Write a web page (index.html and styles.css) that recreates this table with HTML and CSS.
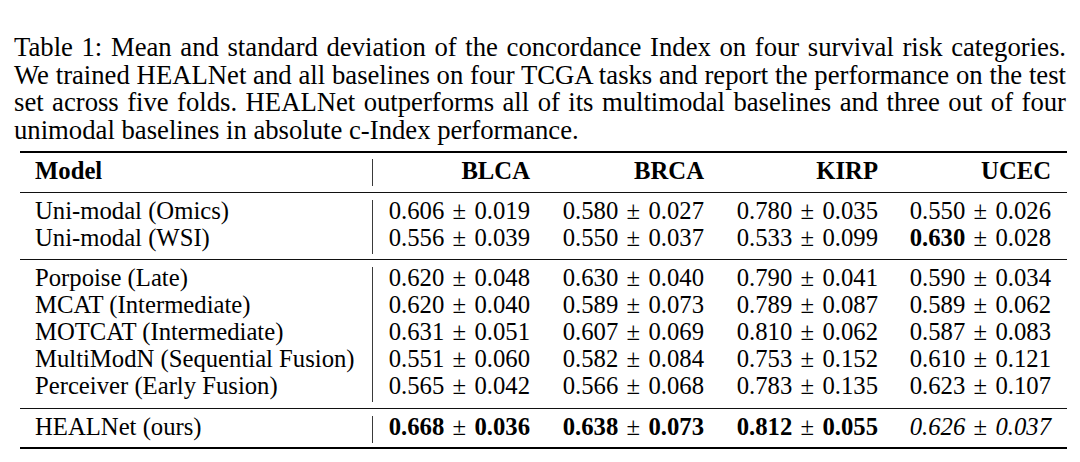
FILE: index.html
```html
<!DOCTYPE html>
<html lang="en">
<head>
<meta charset="utf-8">
<title>Table 1</title>
<link rel="stylesheet" href="styles.css">
</head>
<body>
<div class="page">
  <p class="caption">
    <span class="line">Table 1: Mean and standard deviation of the concordance Index on four survival risk categories.</span>
    <span class="line">We trained HEALNet and all baselines on four TCGA tasks and report the performance on the test</span>
    <span class="line">set across five folds. HEALNet outperforms all of its multimodal baselines and three out of four</span>
    <span class="line last">unimodal baselines in absolute c-Index performance.</span>
  </p>
  <div class="table">
    <div class="rule thick"></div>
    <div class="group head">
      <div class="row">
        <div class="cell model">Model</div>
        <div class="cell num c1">BLCA</div>
        <div class="cell num c2">BRCA</div>
        <div class="cell num c3">KIRP</div>
        <div class="cell num c4">UCEC</div>
      </div>
    </div>
    <div class="rule"></div>
    <div class="group g1">
      <div class="row">
        <div class="cell model">Uni-modal (Omics)</div>
        <div class="cell num c1">0.606<span class="pm">±</span>0.019</div>
        <div class="cell num c2">0.580<span class="pm">±</span>0.027</div>
        <div class="cell num c3">0.780<span class="pm">±</span>0.035</div>
        <div class="cell num c4">0.550<span class="pm">±</span>0.026</div>
      </div>
      <div class="row">
        <div class="cell model">Uni-modal (WSI)</div>
        <div class="cell num c1">0.556<span class="pm">±</span>0.039</div>
        <div class="cell num c2">0.550<span class="pm">±</span>0.037</div>
        <div class="cell num c3">0.533<span class="pm">±</span>0.099</div>
        <div class="cell num c4"><b>0.630</b><span class="pm">±</span>0.028</div>
      </div>
    </div>
    <div class="rule"></div>
    <div class="group g2">
      <div class="row">
        <div class="cell model">Porpoise (Late)</div>
        <div class="cell num c1">0.620<span class="pm">±</span>0.048</div>
        <div class="cell num c2">0.630<span class="pm">±</span>0.040</div>
        <div class="cell num c3">0.790<span class="pm">±</span>0.041</div>
        <div class="cell num c4">0.590<span class="pm">±</span>0.034</div>
      </div>
      <div class="row">
        <div class="cell model">MCAT (Intermediate)</div>
        <div class="cell num c1">0.620<span class="pm">±</span>0.040</div>
        <div class="cell num c2">0.589<span class="pm">±</span>0.073</div>
        <div class="cell num c3">0.789<span class="pm">±</span>0.087</div>
        <div class="cell num c4">0.589<span class="pm">±</span>0.062</div>
      </div>
      <div class="row">
        <div class="cell model">MOTCAT (Intermediate)</div>
        <div class="cell num c1">0.631<span class="pm">±</span>0.051</div>
        <div class="cell num c2">0.607<span class="pm">±</span>0.069</div>
        <div class="cell num c3">0.810<span class="pm">±</span>0.062</div>
        <div class="cell num c4">0.587<span class="pm">±</span>0.083</div>
      </div>
      <div class="row">
        <div class="cell model">MultiModN (Sequential Fusion)</div>
        <div class="cell num c1">0.551<span class="pm">±</span>0.060</div>
        <div class="cell num c2">0.582<span class="pm">±</span>0.084</div>
        <div class="cell num c3">0.753<span class="pm">±</span>0.152</div>
        <div class="cell num c4">0.610<span class="pm">±</span>0.121</div>
      </div>
      <div class="row">
        <div class="cell model">Perceiver (Early Fusion)</div>
        <div class="cell num c1">0.565<span class="pm">±</span>0.042</div>
        <div class="cell num c2">0.566<span class="pm">±</span>0.068</div>
        <div class="cell num c3">0.783<span class="pm">±</span>0.135</div>
        <div class="cell num c4">0.623<span class="pm">±</span>0.107</div>
      </div>
    </div>
    <div class="rule"></div>
    <div class="group g3">
      <div class="row">
        <div class="cell model">HEALNet (ours)</div>
        <div class="cell num c1"><b>0.668</b><span class="pm">±</span><b>0.036</b></div>
        <div class="cell num c2"><b>0.638</b><span class="pm">±</span><b>0.073</b></div>
        <div class="cell num c3"><b>0.812</b><span class="pm">±</span><b>0.055</b></div>
        <div class="cell num c4"><i>0.626</i><span class="pm">±</span><i>0.037</i></div>
      </div>
    </div>
    <div class="rule thick"></div>
  </div>
</div>
</body>
</html>
```

FILE: styles.css
```css
html, body {
  margin: 0;
  padding: 0;
  background: #ffffff;
  color: #000000;
  font-family: "Liberation Serif", "Times New Roman", serif;
}

.page {
  padding: 34px 0 0 14px;
}

.caption {
  margin: 0;
  width: 1052px;
  font-size: 26.7px;
  line-height: 27.5px;
}

.line {
  display: block;
  text-align: justify;
  text-align-last: justify;
}

.line.last {
  text-align-last: left;
}

.table {
  margin: 7px 0 0 6px;
  width: 1047px;
  font-size: 24.7px;
}

.rule {
  height: 1px;
  background: #111111;
}

.rule.thick {
  height: 2px;
  background: #000000;
}

.group {
  padding: 7px 0 5px;
}

.group.head {
  padding: 6px 0 6px;
}

.group.g2 {
  padding: 7px 0 6px;
}

.group.g3 {
  padding: 7px 0 4px;
}

.row {
  display: flex;
  height: 27px;
  line-height: 22px;
}

.head .row {
  line-height: 23px;
}

.cell {
  box-sizing: border-box;
  white-space: nowrap;
}

.head .cell {
  font-weight: bold;
}

.model {
  width: 353px;
  padding-left: 15px;
  border-right: 1px solid #3a3a3a;
}

.num {
  text-align: right;
  padding-right: 16px;
}

.c1 { width: 173px; }
.c2 { width: 174px; }
.c3 { width: 174px; }
.c4 { width: 173px; }

.pm {
  margin: 0 8.3px;
  font-style: normal;
  font-weight: normal;
}
```
